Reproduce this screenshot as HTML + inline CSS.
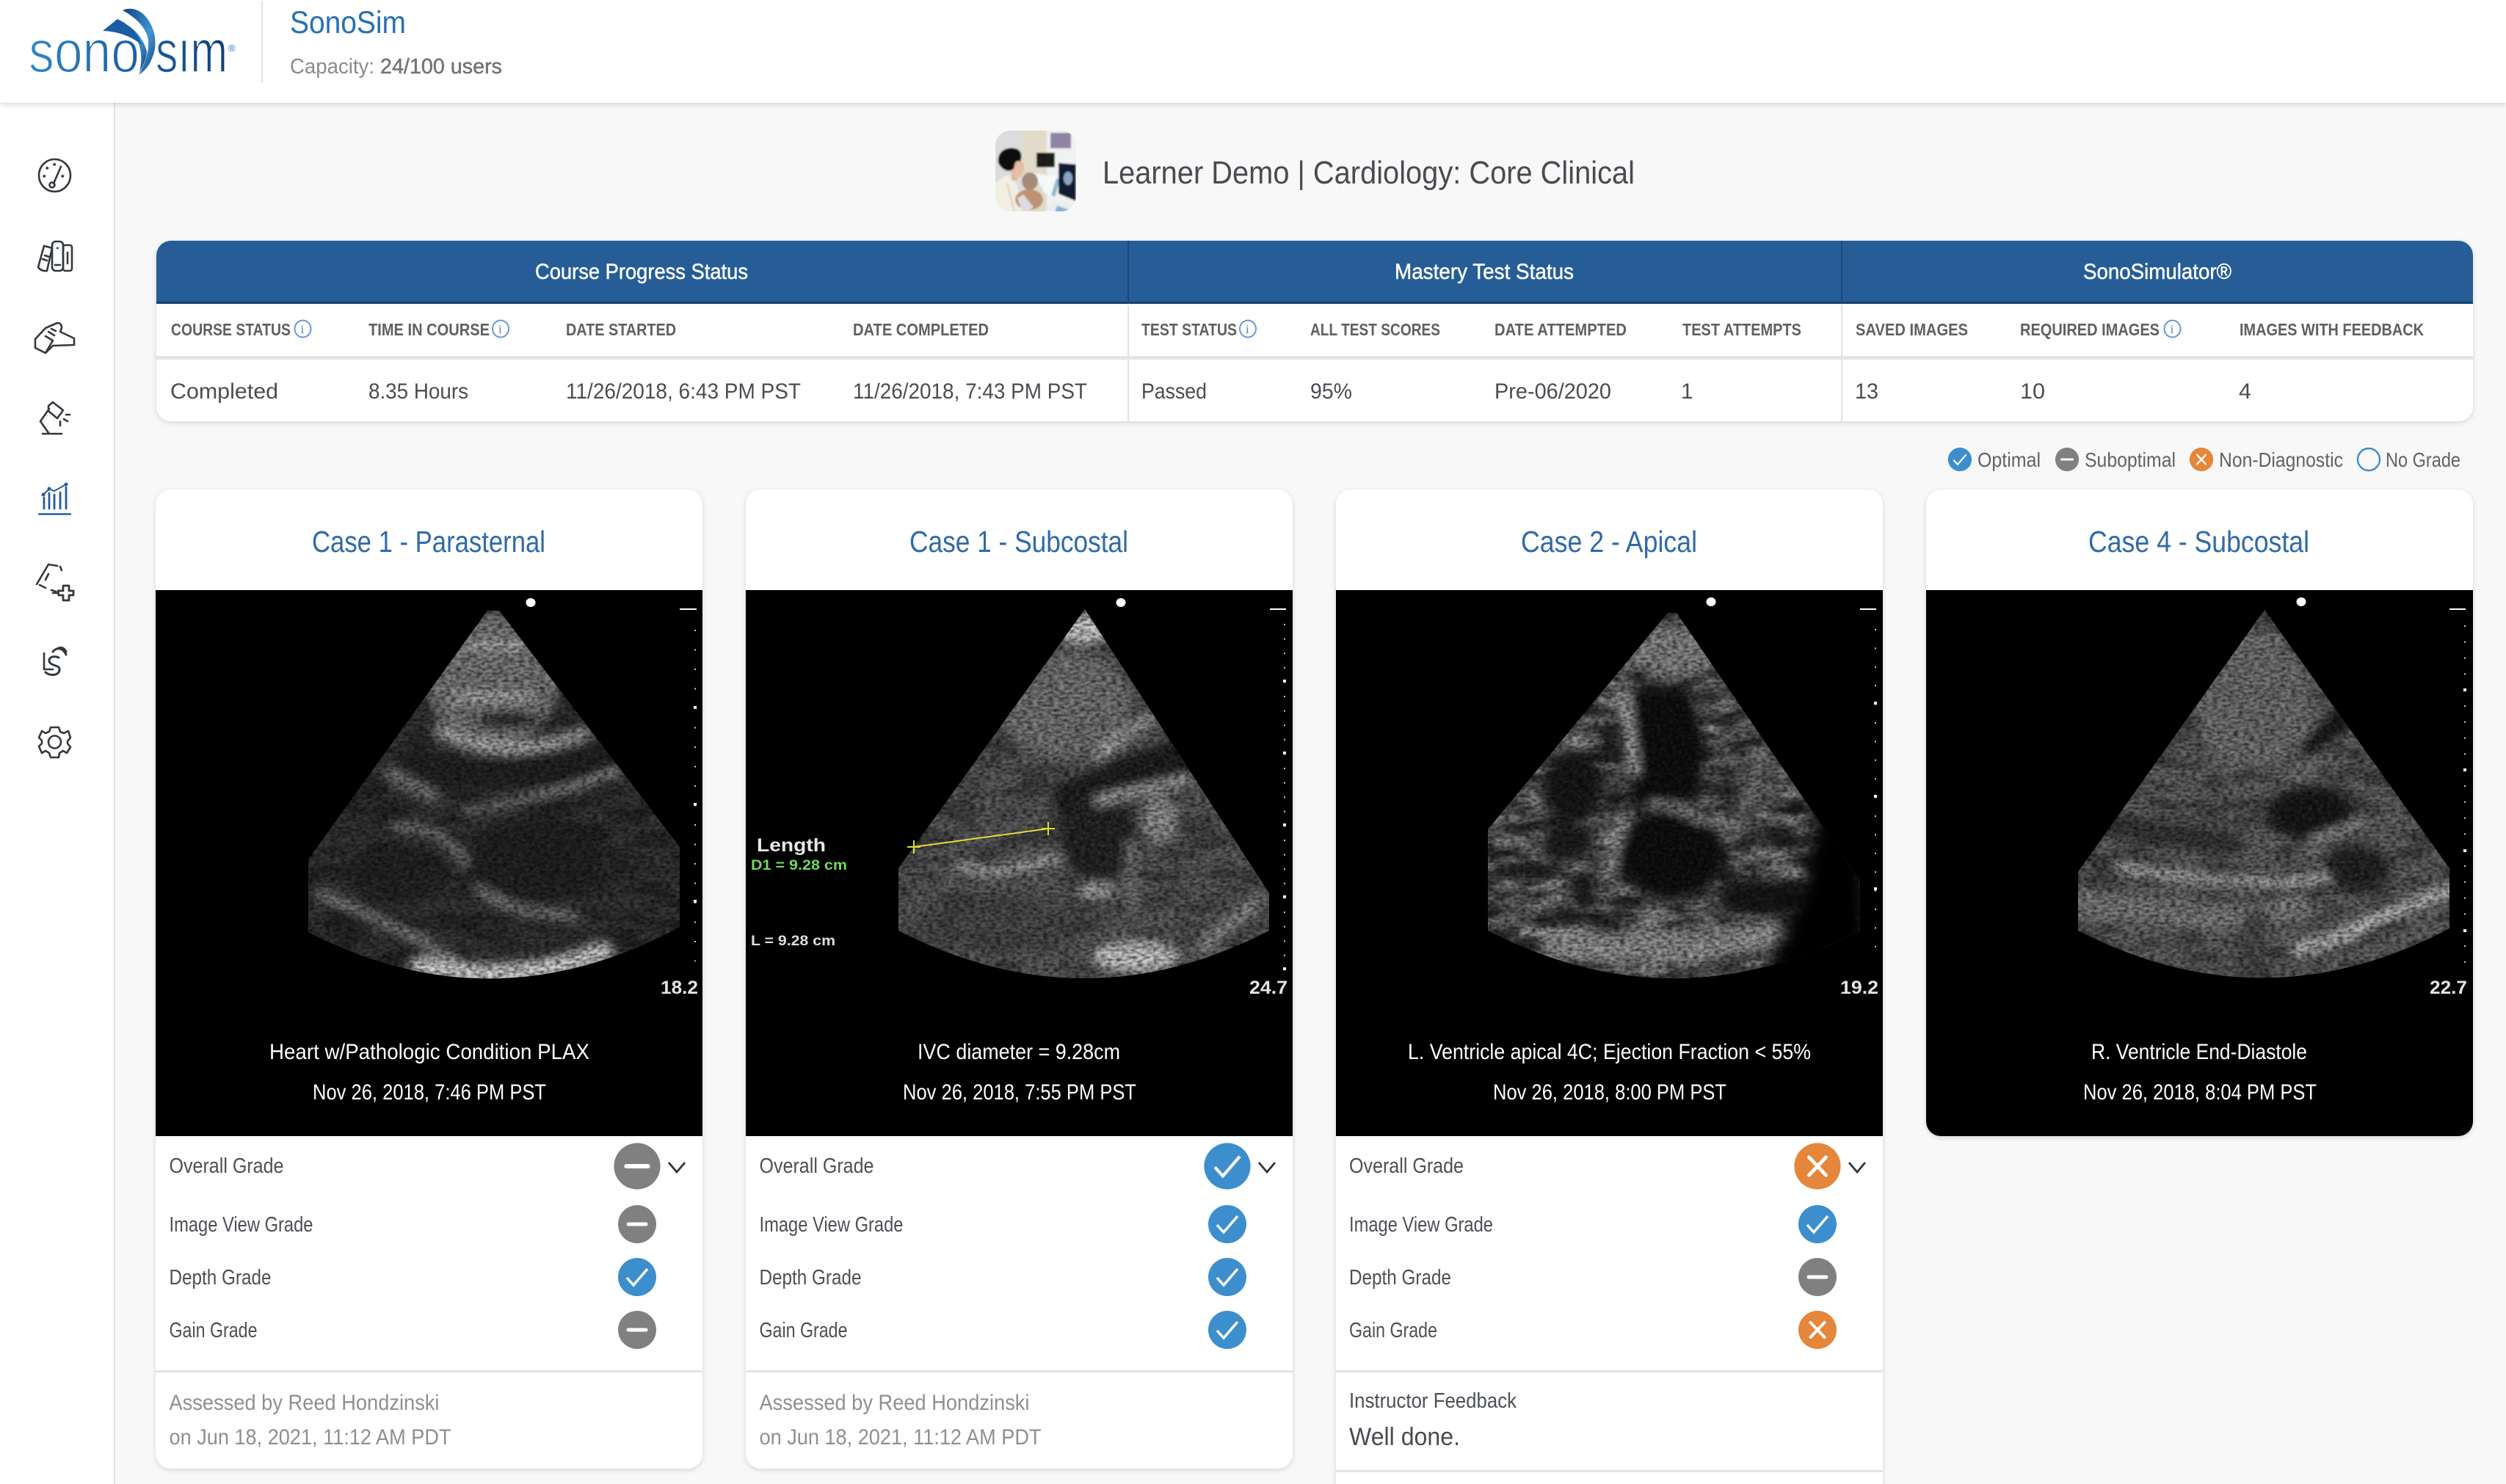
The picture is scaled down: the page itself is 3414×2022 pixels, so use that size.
<!DOCTYPE html>
<html lang="en"><head><meta charset="utf-8"><title>SonoSim</title>
<style>
html,body{margin:0;padding:0;width:3414px;height:2022px;overflow:hidden;background:#f8f8f8;font-family:"Liberation Sans",sans-serif}
#pg{position:relative;width:3414px;height:2022px;overflow:hidden;background:#f8f8f8}
.a{position:absolute;box-sizing:border-box}
#hd{left:0;top:0;width:3414px;height:140px;background:#fff;box-shadow:0 2px 8px rgba(0,0,0,.16);z-index:2}
#sb{left:0;top:140px;width:157px;height:1882px;background:#fff;border-right:2px solid #e3e3e8}
.card{background:#fff;border-radius:20px;box-shadow:0 2px 7px rgba(0,0,0,.14);overflow:hidden;width:745px}
.img{position:absolute;left:0;top:137px;width:745px;height:744px;background:#000}
.ln{position:absolute;left:0;width:745px;height:3px;background:#e1e4ea}
#tb{left:213px;top:328px;width:3156px;height:246px;background:#fff;border-radius:20px;box-shadow:0 2px 8px rgba(0,0,0,.14);overflow:hidden}
#svg{position:absolute;left:0;top:0;z-index:3}
text{font-family:"Liberation Sans",sans-serif}
.h{fill:#5f6063;font-weight:bold;font-size:23px}.v{fill:#4a4d51;font-size:30px}
.l{fill:#4c5055;font-size:29px}.g{fill:#8f8f8f;font-size:30px}.c{fill:#fff;font-size:30px}
.ct{fill:#2f6aa8;font-size:41px}.w{fill:#fff;font-size:30px;stroke:#fff;stroke-width:.5}
.n{fill:#e4e4e4;font-weight:bold;font-size:25px}
.lg{fill:#606366;font-size:28px}
.ic{fill:none;stroke:#33383d;stroke-width:2.6;stroke-linecap:round;stroke-linejoin:round}
.ib{fill:none;stroke:#6a98d2;stroke-width:2}
.ii{fill:#4f86c8;font-size:17px;font-family:"Liberation Serif",serif}
</style></head><body><div id="pg">
<div class="a" id="hd"></div>
<div class="a" id="sb"></div>
<div class="a" id="tb">
<div class="a" style="left:0;top:0;width:3156px;height:86px;background:#265d96;border-bottom:3px solid #14406c"></div>
<div class="a" style="left:1323px;top:0;width:2px;height:86px;background:#1b4a7a"></div>
<div class="a" style="left:2295px;top:0;width:2px;height:86px;background:#1b4a7a"></div>
<div class="a" style="left:1323px;top:88px;width:2px;height:158px;background:#e2e2e2"></div>
<div class="a" style="left:2295px;top:88px;width:2px;height:158px;background:#e2e2e2"></div>
<div class="a" style="left:0;top:157px;width:3156px;height:5px;background:#e4e4e4"></div>
</div>
<div class="a card" style="left:212px;top:667px;height:1334px"><div class="img"></div><div class="ln" style="top:1200px"></div></div>
<div class="a card" style="left:1016px;top:667px;height:1334px"><div class="img"></div><div class="ln" style="top:1200px"></div></div>
<div class="a card" style="left:1820px;top:667px;height:1385px"><div class="img"></div><div class="ln" style="top:1200px"></div><div class="ln" style="top:1336px"></div></div>
<div class="a card" style="left:2624px;top:667px;height:881px"><div class="img"></div></div>

<svg id="svg" width="3414" height="2022" viewBox="0 0 3414 2022" xmlns="http://www.w3.org/2000/svg">
<defs>
<linearGradient id="lgT" x1="0" x2="1" y1="0" y2="0"><stop offset="0" stop-color="#2f86c6"/><stop offset="1" stop-color="#1d5fa3"/></linearGradient>
<linearGradient id="lgS" x1="0" x2="1" y1="0" y2="0"><stop offset="0" stop-color="#1a5a9c"/><stop offset="1" stop-color="#0f3f78"/></linearGradient>
<linearGradient id="sw" x1="0" x2="1" y1="0" y2="1"><stop offset="0" stop-color="#123f7c"/><stop offset=".6" stop-color="#3f97d6"/><stop offset="1" stop-color="#123f7c"/></linearGradient>
<filter id="b1" x="-5%" y="-5%" width="110%" height="110%"><feGaussianBlur stdDeviation="1"/></filter>
<filter id="b6" x="-20%" y="-20%" width="140%" height="140%"><feGaussianBlur stdDeviation="7"/></filter>
<filter id="b10" x="-20%" y="-20%" width="140%" height="140%"><feGaussianBlur stdDeviation="11"/></filter>
<filter id="sp" x="0" y="0" width="100%" height="100%" color-interpolation-filters="sRGB"><feTurbulence type="fractalNoise" baseFrequency=".14 .3" numOctaves="2" seed="4"/><feColorMatrix values="0 0 0 0 0 0 0 0 0 0 0 0 0 0 0 1.500 0 0 0 -.52"/><feGaussianBlur stdDeviation=".7"/></filter>
<filter id="sw2" x="0" y="0" width="100%" height="100%" color-interpolation-filters="sRGB"><feTurbulence type="fractalNoise" baseFrequency=".24 .22" numOctaves="2" seed="9"/><feColorMatrix values="0 0 0 0 1 0 0 0 0 1 0 0 0 0 1 0 2 0 0 -.85"/><feGaussianBlur stdDeviation=".7"/></filter>
<filter id="mo" x="0" y="0" width="100%" height="100%" color-interpolation-filters="sRGB"><feTurbulence type="fractalNoise" baseFrequency=".018 .045" numOctaves="3" seed="12"/><feColorMatrix values="0 0 0 0 0 0 0 0 0 0 0 0 0 0 0 3.400 0 0 0 -1.350"/></filter>
<filter id="mw" x="0" y="0" width="100%" height="100%" color-interpolation-filters="sRGB"><feTurbulence type="fractalNoise" baseFrequency=".022 .05" numOctaves="3" seed="31"/><feColorMatrix values="0 0 0 0 1 0 0 0 0 1 0 0 0 0 1 0 3.400 0 0 -1.450"/></filter>
<clipPath id="s1"><path d="M664 832L680 832 926 1154V1263Q672 1400 420 1270V1171Z"/></clipPath>
<clipPath id="s2"><path d="M1478 830L1729 1217V1268Q1478 1398 1224 1268V1183Z"/></clipPath>
<clipPath id="s3"><path d="M2272 835L2284 835 2534 1200V1268Q2280 1398 2027 1268V1130Z"/></clipPath>
<clipPath id="s4"><path d="M3085 831L3337 1183V1265Q3085 1398 2831 1268V1188Z"/></clipPath>
<clipPath id="av"><rect x="1356" y="178" width="110" height="110" rx="20"/></clipPath>
<g id="ok"><circle r="26" fill="#3d8ecd"/><path d="M-14 1L-5 11 14-11" fill="none" stroke="#fff" stroke-width="3.4"/></g>
<g id="sub"><circle r="26" fill="#808080"/><path d="M-12 0H12" stroke="#fff" stroke-width="5" stroke-linecap="round"/></g>
<g id="bad"><circle r="26" fill="#e5863a"/><path d="M-9.500-10L9.500 10M9.500-10L-9.500 10" fill="none" stroke="#fff" stroke-width="4" stroke-linecap="round"/></g>
<g id="chev"><path d="M-11-7L0 6 11-7" fill="none" stroke="#2f343a" stroke-width="2.8"/></g>
<g id="inf"><ellipse rx="11" ry="11.500" class="ib"/><text class="ii" x="-3" y="6">i</text></g>
</defs>

<!-- logo -->
<path d="M167 14C178 9 190 13 198 22 212 38 216 62 206 82 202 92 195 98 189 102 198 85 205 67 201 50 197 35 183 23 167 14Z" fill="url(#sw)"/>
<path d="M155 27C178 32 194 48 200 70 200 78 196 88 190 98 195 78 192 62 183 48 175 38 166 31 155 27Z" fill="url(#sw)"/>
<path d="M140 42L160 26C176 33 188 46 194 62 180 50 162 43 140 42Z" fill="#1c5ea6"/>
<text x="39" y="98" font-size="82" textLength="151" lengthAdjust="spacingAndGlyphs" fill="url(#lgT)" stroke="#fff" stroke-width="1.800">sono</text>
<text x="212" y="98" font-size="82" textLength="98" lengthAdjust="spacingAndGlyphs" fill="url(#lgS)" stroke="#fff" stroke-width="1.600">sım</text>
<text x="311" y="70" font-size="13" fill="#2a70b0">®</text>
<rect x="356" y="2" width="2" height="111" fill="#e2e2e2"/>
<text x="395" y="45" font-size="43" textLength="158" lengthAdjust="spacingAndGlyphs" fill="#2a6fb3">SonoSim</text>
<text x="395" y="100" font-size="29" textLength="115" lengthAdjust="spacingAndGlyphs" fill="#8a8a8a">Capacity:</text>
<text x="518" y="100" font-size="29" textLength="166" lengthAdjust="spacingAndGlyphs" fill="#747474" stroke="#747474" stroke-width=".5">24/100 users</text>

<!-- sidebar icons -->
<g class="ic">
<ellipse cx="74.500" cy="239" rx="21.500" ry="22"/><path d="M73 250L83 227"/><circle cx="71" cy="252" r="3.500"/>
<path d="M60 240h.5M64 229h.5M74 224h.5M85 240h.5" stroke-width="3.500"/>
<path d="M52 364L60 335 71 338 64 369Q56 370 52 364ZM61 348L67 350M58 353L64 355"/>
<rect x="71" y="329" width="15" height="40" rx="5"/><path d="M75 361H82M78 338h.5"/>
<rect x="86" y="334" width="12" height="35" rx="3"/><path d="M92 344V359"/>
<path d="M48 462L62 447 78 440Q84 440 84 447L82 452 101 461V470L72 471 62 481 48 474 48 462ZM62 458L72 464 62 481M70 448L76 451M66 452L74 457"/>
<path d="M55 574L67 557M55 574L67 591M58 591H84M66 553L72 548 86 559 78 570 66 560ZM82 574V580M87 571L92 574M90 565H95"/>
</g>
<g fill="none" stroke="#265d96" stroke-linecap="round">
<path d="M53 700.500H96" stroke-width="2.400"/><path d="M60 678V693M67 672V693M74 674V693M82 671V693M90 664V693" stroke-width="2.800"/>
<path d="M59 674L67 666 74 669 90 660" stroke-width="2"/>
<circle cx="59" cy="674" r="2" fill="#265d96"/><circle cx="67" cy="666" r="2" fill="#265d96"/><circle cx="90" cy="660" r="2" fill="#265d96"/>
</g>
<g class="ic">
<path d="M50 796L66 769 78 771M82 772L84 777M54 797L62 801M70 804L76 806M66 782L62 790M72 808H78"/>
<path d="M79 805H86V798H94V805H100V811H94V818H86V811H80Z" stroke-width="2.800"/>
<path d="M60 890V912H72"/><path d="M80 896C72 892 64 897 68 903 72 908 82 906 81 913 80 921 68 921 62 916" stroke-width="3"/>
<path d="M72 888C78 881 86 883 90 892M78 884C84 880 88 884 90 888" stroke-width="3"/>
<circle cx="74.500" cy="1011" r="8.500"/>
<path d="M69 991H80L82 997 87 999 93 996 96 1005 92 1010V1013L96 1018 91 1026 86 1023 81 1026 80 1032H69L67 1026 62 1023 57 1026 53 1017 57 1013V1009L53 1005 57 996 62 999 67 997Z"/>
</g>

<!-- heading -->
<g clip-path="url(#av)"><g filter="url(#b1)">
<rect x="1350" y="172" width="50" height="122" fill="#dcdcdc"/>
<rect x="1393" y="172" width="34" height="122" fill="#e2dbc9"/>
<rect x="1426" y="172" width="46" height="122" fill="#f0f1f3"/>
<rect x="1431" y="181" width="28" height="21" fill="#8f84a6"/>
<rect x="1412" y="208" width="25" height="20" fill="#1e1e1e"/>
<path d="M1425 237L1444 245 1437 268 1418 258Z" fill="#8db7cf"/>
<path d="M1350 252L1373 238 1385 250 1396 294H1350Z" fill="#f3eee2"/>
<path d="M1372 250L1382 288" stroke="#d4cdbd" stroke-width="2" fill="none"/>
<rect x="1378" y="232" width="8" height="14" fill="#e0b59c"/>
<ellipse cx="1386" cy="229" rx="9" ry="13" fill="#e5bda5"/>
<path d="M1360 222C1358 205 1372 200 1382 202 1394 204 1392 216 1390 220 1384 218 1382 222 1382 228 1378 236 1366 234 1360 222Z" fill="#0e0e10"/>
<path d="M1408 236L1440 240 1432 266 1422 262Z" fill="#f6f7f9"/>
<ellipse cx="1403" cy="247" rx="11" ry="12" fill="#a58a78"/>
<ellipse cx="1402" cy="272" rx="19" ry="14" fill="#be9274"/>
<path d="M1394 265L1408 282 1394 292 1386 270Z" fill="#dddde0"/>
<path d="M1442 222L1466 224V274L1442 264Z" fill="#0f1a30"/>
<ellipse cx="1455" cy="243" rx="6" ry="9" fill="#8aa5c4"/>
<path d="M1418 294L1438 272 1466 282V294Z" fill="#eceef0"/>
<path d="M1440 280L1462 288 1458 294H1436Z" fill="#7fb2dc"/>
</g></g>
<text x="1502" y="250" font-size="44" textLength="725" lengthAdjust="spacingAndGlyphs" fill="#484c51">Learner Demo | Cardiology: Core Clinical</text>

<!-- table -->
<text class="w" x="729" y="380" textLength="290" lengthAdjust="spacingAndGlyphs">Course Progress Status</text>
<text class="w" x="1900" y="380" textLength="244" lengthAdjust="spacingAndGlyphs">Mastery Test Status</text>
<text class="w" x="2838" y="380" textLength="202" lengthAdjust="spacingAndGlyphs">SonoSimulator®</text>
<text class="h" x="233" y="457" textLength="163" lengthAdjust="spacingAndGlyphs">COURSE STATUS</text>
<text class="h" x="502" y="457" textLength="165" lengthAdjust="spacingAndGlyphs">TIME IN COURSE</text>
<text class="h" x="771" y="457" textLength="150" lengthAdjust="spacingAndGlyphs">DATE STARTED</text>
<text class="h" x="1162" y="457" textLength="185" lengthAdjust="spacingAndGlyphs">DATE COMPLETED</text>
<text class="h" x="1555" y="457" textLength="130" lengthAdjust="spacingAndGlyphs">TEST STATUS</text>
<text class="h" x="1785" y="457" textLength="177" lengthAdjust="spacingAndGlyphs">ALL TEST SCORES</text>
<text class="h" x="2036" y="457" textLength="180" lengthAdjust="spacingAndGlyphs">DATE ATTEMPTED</text>
<text class="h" x="2292" y="457" textLength="162" lengthAdjust="spacingAndGlyphs">TEST ATTEMPTS</text>
<text class="h" x="2528" y="457" textLength="153" lengthAdjust="spacingAndGlyphs">SAVED IMAGES</text>
<text class="h" x="2752" y="457" textLength="190" lengthAdjust="spacingAndGlyphs">REQUIRED IMAGES</text>
<text class="h" x="3051" y="457" textLength="251" lengthAdjust="spacingAndGlyphs">IMAGES WITH FEEDBACK</text>
<use href="#inf" x="412.500" y="448"/><use href="#inf" x="682" y="448"/><use href="#inf" x="1700" y="448"/><use href="#inf" x="2959.500" y="448"/>
<text class="v" x="232" y="543" textLength="147" lengthAdjust="spacingAndGlyphs">Completed</text>
<text class="v" x="502" y="543" textLength="136" lengthAdjust="spacingAndGlyphs">8.35 Hours</text>
<text class="v" x="771" y="543" textLength="320" lengthAdjust="spacingAndGlyphs">11/26/2018, 6:43 PM PST</text>
<text class="v" x="1162" y="543" textLength="319" lengthAdjust="spacingAndGlyphs">11/26/2018, 7:43 PM PST</text>
<text class="v" x="1555" y="543" textLength="89" lengthAdjust="spacingAndGlyphs">Passed</text>
<text class="v" x="1785" y="543" textLength="57" lengthAdjust="spacingAndGlyphs">95%</text>
<text class="v" x="2036" y="543" textLength="159" lengthAdjust="spacingAndGlyphs">Pre-06/2020</text>
<text class="v" x="2290" y="543" font-size="30">1</text>
<text class="v" x="2527" y="543" textLength="32" lengthAdjust="spacingAndGlyphs">13</text>
<text class="v" x="2752" y="543" textLength="34" lengthAdjust="spacingAndGlyphs">10</text>
<text class="v" x="3050" y="543" textLength="17" lengthAdjust="spacingAndGlyphs">4</text>

<!-- legend -->
<g transform="translate(2670,626) scale(.62)"><use href="#ok"/></g>
<g transform="translate(2816,626) scale(.62)"><use href="#sub"/></g>
<g transform="translate(2999,626) scale(.62)"><use href="#bad"/></g>
<circle cx="3227" cy="626" r="15" fill="none" stroke="#3d8ecd" stroke-width="2.400"/>
<text class="lg" x="2694" y="636" textLength="86" lengthAdjust="spacingAndGlyphs">Optimal</text>
<text class="lg" x="2840" y="636" textLength="124" lengthAdjust="spacingAndGlyphs">Suboptimal</text>
<text class="lg" x="3023" y="636" textLength="169" lengthAdjust="spacingAndGlyphs">Non-Diagnostic</text>
<text class="lg" x="3250" y="636" textLength="102" lengthAdjust="spacingAndGlyphs">No Grade</text>

<!-- card titles -->
<text class="ct" x="425" y="752" textLength="318" lengthAdjust="spacingAndGlyphs">Case 1 - Parasternal</text>
<text class="ct" x="1239" y="752" textLength="298" lengthAdjust="spacingAndGlyphs">Case 1 - Subcostal</text>
<text class="ct" x="2072" y="752" textLength="240" lengthAdjust="spacingAndGlyphs">Case 2 - Apical</text>
<text class="ct" x="2845" y="752" textLength="301" lengthAdjust="spacingAndGlyphs">Case 4 - Subcostal</text>

<!-- ultrasound 1 -->
<g clip-path="url(#s1)">
<rect x="410" y="825" width="530" height="520" fill="#363636"/>
<rect x="410" y="825" width="530" height="520" filter="url(#mo)" opacity=".35"/>
<g filter="url(#b6)" fill="none" stroke-linecap="round">
<ellipse cx="672" cy="925" rx="92" ry="92" fill="#8c8c8c" opacity=".85"/>
<ellipse cx="692" cy="981" rx="46" ry="12" fill="#282828"/>
<path d="M598 996Q673 1040 797 999" stroke="#c0c0c0" stroke-width="15"/>
<path d="M640 880H710M620 950H720" stroke="#cfcfcf" stroke-width="8"/>
<path d="M560 1050Q700 1060 860 1030" stroke="#222" stroke-width="46"/>
<path d="M633 1105Q680 1098 722 1088 790 1074 842 1050" stroke="#c4c4c4" stroke-width="6"/>
<path d="M530 1055L590 1085" stroke="#7c7c7c" stroke-width="18"/>
<path d="M540 1125L598 1136 638 1177" stroke="#8c8c8c" stroke-width="12"/>
<path d="M648 1211L702 1240 787 1248" stroke="#a6a6a6" stroke-width="9"/>
<ellipse cx="730" cy="1170" rx="95" ry="58" fill="#1e1e1e" opacity=".85"/>
<ellipse cx="540" cy="1190" rx="72" ry="40" fill="#202020" opacity=".8"/>
<path d="M434 1217L548 1268 623 1309" stroke="#a0a0a0" stroke-width="11"/>
<path d="M573 1316Q697 1345 822 1297" stroke="#dcdcdc" stroke-width="28"/>
</g>
<rect x="410" y="825" width="530" height="520" filter="url(#sp)"/>
<rect x="410" y="825" width="530" height="520" filter="url(#sw2)" opacity=".08"/>
</g>
<!-- ultrasound 2 -->
<g clip-path="url(#s2)">
<rect x="1215" y="825" width="525" height="520" fill="#5c5c5c"/>
<rect x="1215" y="825" width="525" height="520" filter="url(#mo)" opacity=".3"/>
<g filter="url(#b6)" fill="none" stroke-linecap="round">
<ellipse cx="1478" cy="858" rx="35" ry="20" fill="#d8d8d8"/>
<ellipse cx="1450" cy="960" rx="90" ry="70" fill="#828282" opacity=".8"/>
<path d="M1497 1028L1572 974" stroke="#cfcfcf" stroke-width="11"/>
<path d="M1463 1090L1625 1028" stroke="#1a1a1a" stroke-width="58"/>
<ellipse cx="1497" cy="1139" rx="52" ry="60" fill="#222"/>
<path d="M1497 1091L1617 1062" stroke="#b6b6b6" stroke-width="12"/>
<ellipse cx="1580" cy="1115" rx="24" ry="32" fill="#989898"/>
<path d="M1308 1183L1360 1190 1438 1170" stroke="#bfbfbf" stroke-width="13"/>
<ellipse cx="1493" cy="1214" rx="24" ry="8" fill="#d0d0d0"/>
<ellipse cx="1547" cy="1304" rx="60" ry="22" fill="#d0d0d0"/>
<path d="M1640 1290L1715 1225" stroke="#989898" stroke-width="16"/>
<path d="M1540 1150L1545 1240" stroke="#7a7a7a" stroke-width="14"/>
<ellipse cx="1350" cy="1260" rx="110" ry="40" fill="#464646" opacity=".7"/>
</g>
<rect x="1215" y="825" width="525" height="520" filter="url(#sp)"/>
<rect x="1215" y="825" width="525" height="520" filter="url(#sw2)" opacity=".12"/>
</g>
<g stroke="#e4dc3c" stroke-width="2" fill="none"><path d="M1245 1154L1428 1129"/><path d="M1236 1154H1254M1245 1145V1163M1419 1129H1437M1428 1120V1138"/></g>
<text x="1031" y="1160" font-size="25" font-weight="bold" textLength="94" lengthAdjust="spacingAndGlyphs" fill="#e8e8e8">Length</text>
<text x="1023" y="1185" font-size="19" font-weight="bold" textLength="131" lengthAdjust="spacingAndGlyphs" fill="#72d860">D1 = 9.28 cm</text>
<text x="1023" y="1288" font-size="19" font-weight="bold" textLength="115" lengthAdjust="spacingAndGlyphs" fill="#dcdcdc">L = 9.28 cm</text>
<!-- ultrasound 3 -->
<g clip-path="url(#s3)">
<rect x="2020" y="825" width="525" height="520" fill="#585858"/>
<rect x="2020" y="825" width="525" height="520" filter="url(#mw)" opacity=".35"/>
<rect x="2020" y="825" width="525" height="520" filter="url(#mo)" opacity=".6"/>
<g filter="url(#b6)" fill="none" stroke-linecap="round">
<ellipse cx="2278" cy="888" rx="60" ry="34" fill="#8a8a8a"/>
<path d="M2218 945Q2215 1060 2228 1100L2312 1090Q2335 1000 2295 935Z" fill="#0b0b0b"/>
<ellipse cx="2276" cy="1164" rx="72" ry="60" fill="#080808"/>
<ellipse cx="2143" cy="1071" rx="40" ry="46" fill="#141414"/>
<ellipse cx="2138" cy="1146" rx="36" ry="24" fill="#1c1c1c"/>
<ellipse cx="2158" cy="1217" rx="12" ry="26" fill="#141414"/>
<path d="M2213 945L2226 1050" stroke="#b8b8b8" stroke-width="13"/>
<path d="M2210 1118L2190 1190" stroke="#a6a6a6" stroke-width="12"/>
<path d="M2248 1098Q2270 1090 2322 1120" stroke="#dcdcdc" stroke-width="4"/>
<path d="M2120 1285Q2270 1300 2410 1275" stroke="#a8a8a8" stroke-width="42" opacity=".8"/>
<ellipse cx="2400" cy="1225" rx="60" ry="24" fill="#141414"/>
<path d="M2360 1140L2400 1040" stroke="#7a7a7a" stroke-width="24" opacity=".8"/>
</g>
<path d="M2370 830H2540V1340H2390Q2490 1200 2470 1040 2440 920 2370 830Z" fill="#000" filter="url(#b10)"/>
<rect x="2020" y="825" width="525" height="520" filter="url(#sp)"/>
<rect x="2020" y="825" width="400" height="520" filter="url(#sw2)" opacity=".08"/>
</g>
<!-- ultrasound 4 -->
<g clip-path="url(#s4)">
<rect x="2825" y="825" width="520" height="520" fill="#646464"/>
<rect x="2825" y="825" width="520" height="520" filter="url(#mo)" opacity=".35"/>
<g filter="url(#b6)" fill="none" stroke-linecap="round">
<ellipse cx="3070" cy="960" rx="80" ry="90" fill="#7c7c7c" opacity=".8"/>
<path d="M3040 869H3110" stroke="#d0d0d0" stroke-width="4"/>
<path d="M2880 1125L3040 1150" stroke="#363636" stroke-width="30"/>
<ellipse cx="3147" cy="1108" rx="58" ry="36" fill="#121212"/>
<ellipse cx="3212" cy="1183" rx="44" ry="30" fill="#242424"/>
<path d="M3145 1018L3195 975" stroke="#0a0a0a" stroke-width="20"/>
<path d="M3117 1052L3157 1047" stroke="#d4d4d4" stroke-width="6"/>
<path d="M3150 1145L3220 1120M3130 1165L3160 1162" stroke="#c8c8c8" stroke-width="6"/>
<path d="M2885 1178Q2960 1200 3058 1197 3110 1205 3170 1197" stroke="#dcdcdc" stroke-width="9"/>
<path d="M2835 1230Q3000 1260 3130 1240" stroke="#8a8a8a" stroke-width="40" opacity=".8"/>
<path d="M3130 1295L3210 1270" stroke="#b8b8b8" stroke-width="22"/>
<path d="M3210 1262L3340 1212" stroke="#d4d4d4" stroke-width="15"/>
<path d="M3060 1305L3075 1255" stroke="#4c4c4c" stroke-width="36"/>
</g>
<rect x="2825" y="825" width="520" height="520" filter="url(#sp)"/>
<rect x="2825" y="825" width="520" height="520" filter="url(#sw2)" opacity=".1"/>
</g>
<!-- image overlays -->
<g fill="#fff">
<ellipse cx="723" cy="821" rx="6.500" ry="6"/><ellipse cx="1527" cy="821" rx="6.500" ry="6"/><ellipse cx="2331" cy="820" rx="6.500" ry="6"/><ellipse cx="3135" cy="820" rx="6.500" ry="6"/>
<rect x="926" y="829" width="23" height="2"/><rect x="1730" y="829" width="22" height="2"/><rect x="2534" y="829" width="22" height="2"/><rect x="3337" y="829" width="22" height="2"/>
<rect x="945" y="962" width="4" height="4"/><rect x="945" y="1094" width="4" height="4"/><rect x="945" y="1226" width="4" height="4"/>
<rect x="1748" y="926" width="4" height="4"/><rect x="1748" y="1024" width="4" height="4"/><rect x="1748" y="1122" width="4" height="4"/><rect x="1748" y="1220" width="4" height="4"/><rect x="1748" y="1318" width="4" height="4"/>
<rect x="2553" y="956" width="4" height="4"/><rect x="2553" y="1083" width="4" height="4"/><rect x="2553" y="1209" width="4" height="4"/>
<rect x="3356" y="938" width="4" height="4"/><rect x="3356" y="1047" width="4" height="4"/><rect x="3356" y="1157" width="4" height="4"/><rect x="3356" y="1266" width="4" height="4"/>
</g>
<g stroke="#ccc" stroke-width="2" fill="none">
<path d="M947 858V1310" stroke-dasharray="2 24.500"/><path d="M1750 850V1320" stroke-dasharray="2 17.600"/><path d="M2555 857V1314" stroke-dasharray="2 23.400"/><path d="M3358 852V1313" stroke-dasharray="2 19.800"/>
</g>
<text class="n" x="900" y="1354" textLength="51" lengthAdjust="spacingAndGlyphs">18.2</text>
<text class="n" x="1702" y="1354" textLength="52" lengthAdjust="spacingAndGlyphs">24.7</text>
<text class="n" x="2507" y="1354" textLength="52" lengthAdjust="spacingAndGlyphs">19.2</text>
<text class="n" x="3310" y="1354" textLength="51" lengthAdjust="spacingAndGlyphs">22.7</text>
<text class="c" x="367" y="1443" textLength="436" lengthAdjust="spacingAndGlyphs">Heart w/Pathologic Condition PLAX</text>
<text class="c" x="426" y="1498" textLength="318" lengthAdjust="spacingAndGlyphs">Nov 26, 2018, 7:46 PM PST</text>
<text class="c" x="1250" y="1443" textLength="276" lengthAdjust="spacingAndGlyphs">IVC diameter = 9.28cm</text>
<text class="c" x="1230" y="1498" textLength="318" lengthAdjust="spacingAndGlyphs">Nov 26, 2018, 7:55 PM PST</text>
<text class="c" x="1918" y="1443" textLength="549" lengthAdjust="spacingAndGlyphs">L. Ventricle apical 4C; Ejection Fraction &lt; 55%</text>
<text class="c" x="2034" y="1498" textLength="318" lengthAdjust="spacingAndGlyphs">Nov 26, 2018, 8:00 PM PST</text>
<text class="c" x="2849" y="1443" textLength="294" lengthAdjust="spacingAndGlyphs">R. Ventricle End-Diastole</text>
<text class="c" x="2838" y="1498" textLength="318" lengthAdjust="spacingAndGlyphs">Nov 26, 2018, 8:04 PM PST</text>

<!-- grades -->
<text class="l" x="230.500" y="1598" textLength="156" lengthAdjust="spacingAndGlyphs">Overall Grade</text>
<text class="l" x="230.500" y="1678" textLength="196" lengthAdjust="spacingAndGlyphs">Image View Grade</text>
<text class="l" x="230.500" y="1750" textLength="139" lengthAdjust="spacingAndGlyphs">Depth Grade</text>
<text class="l" x="230.500" y="1822" textLength="120" lengthAdjust="spacingAndGlyphs">Gain Grade</text>
<g transform="translate(868,1589) scale(1.215)"><use href="#sub"/></g><use href="#chev" x="922" y="1591"/>
<use href="#sub" x="868" y="1668"/><use href="#ok" x="868" y="1740"/><use href="#sub" x="868" y="1812"/>
<text class="g" x="230.500" y="1921" textLength="368" lengthAdjust="spacingAndGlyphs">Assessed by Reed Hondzinski</text>
<text class="g" x="230.500" y="1968" textLength="384" lengthAdjust="spacingAndGlyphs">on Jun 18, 2021, 11:12 AM PDT</text>

<text class="l" x="1034.500" y="1598" textLength="156" lengthAdjust="spacingAndGlyphs">Overall Grade</text>
<text class="l" x="1034.500" y="1678" textLength="196" lengthAdjust="spacingAndGlyphs">Image View Grade</text>
<text class="l" x="1034.500" y="1750" textLength="139" lengthAdjust="spacingAndGlyphs">Depth Grade</text>
<text class="l" x="1034.500" y="1822" textLength="120" lengthAdjust="spacingAndGlyphs">Gain Grade</text>
<g transform="translate(1672,1589) scale(1.215)"><use href="#ok"/></g><use href="#chev" x="1726" y="1591"/>
<use href="#ok" x="1672" y="1668"/><use href="#ok" x="1672" y="1740"/><use href="#ok" x="1672" y="1812"/>
<text class="g" x="1034.500" y="1921" textLength="368" lengthAdjust="spacingAndGlyphs">Assessed by Reed Hondzinski</text>
<text class="g" x="1034.500" y="1968" textLength="384" lengthAdjust="spacingAndGlyphs">on Jun 18, 2021, 11:12 AM PDT</text>

<text class="l" x="1838" y="1598" textLength="156" lengthAdjust="spacingAndGlyphs">Overall Grade</text>
<text class="l" x="1838" y="1678" textLength="196" lengthAdjust="spacingAndGlyphs">Image View Grade</text>
<text class="l" x="1838" y="1750" textLength="139" lengthAdjust="spacingAndGlyphs">Depth Grade</text>
<text class="l" x="1838" y="1822" textLength="120" lengthAdjust="spacingAndGlyphs">Gain Grade</text>
<g transform="translate(2476,1589) scale(1.215)"><use href="#bad"/></g><use href="#chev" x="2530" y="1591"/>
<use href="#ok" x="2476" y="1668"/><use href="#sub" x="2476" y="1740"/><use href="#bad" x="2476" y="1812"/>
<text class="l" x="1838" y="1918" textLength="228" lengthAdjust="spacingAndGlyphs">Instructor Feedback</text>
<text x="1838" y="1969" font-size="34" textLength="151" lengthAdjust="spacingAndGlyphs" fill="#474b50">Well done.</text>
</svg>
</div></body></html>
